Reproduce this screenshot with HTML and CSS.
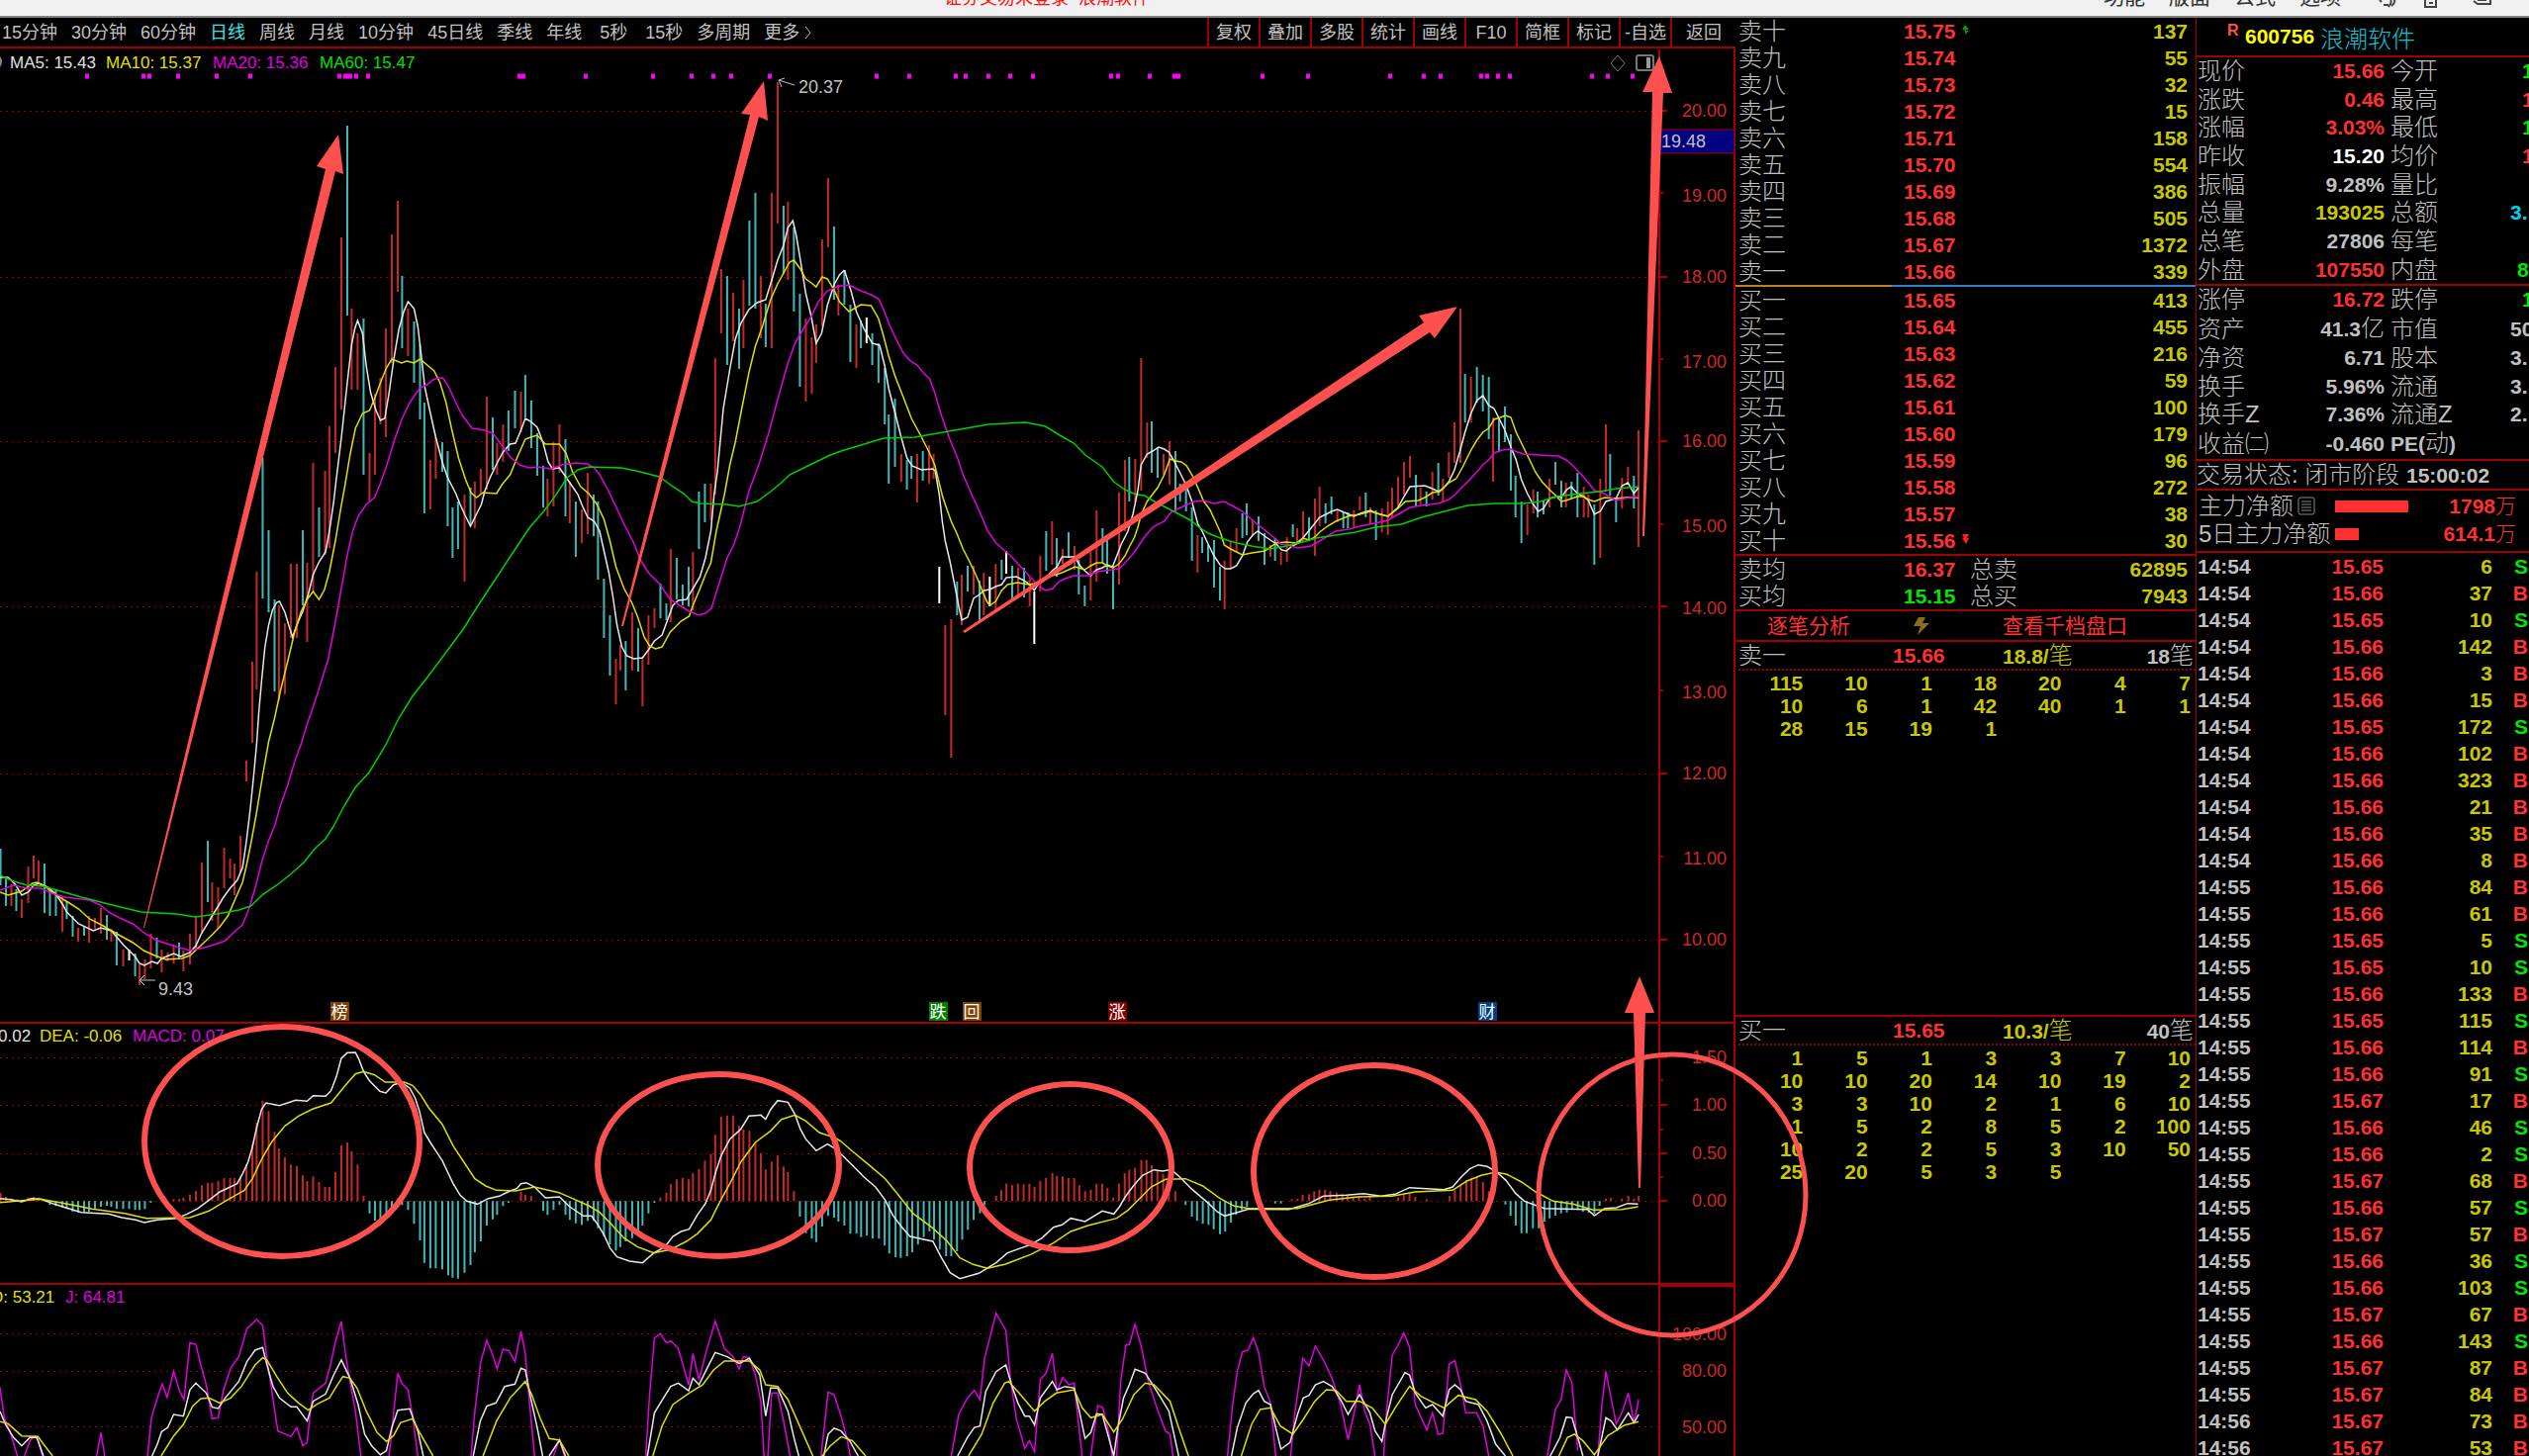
FILE: index.html
```html
<!DOCTYPE html>
<html lang="zh-CN">
<head>
<meta charset="utf-8">
<title>浪潮软件 600756</title>
<link rel="stylesheet" href="styles.css">
</head>
<body>
<header class="titlebar">
  <span class="app-title">证券交易未登录&nbsp; 浪潮软件</span>
  <nav class="menu">
    <a href="#">功能</a><a href="#">版面</a><a href="#">公式</a><a href="#">选项</a>
    <svg class="menu-icons" viewBox="0 0 130 17" width="130" height="17" fill="none" stroke="#444" stroke-width="2"><path d="M3 0l2 2M7 5h5M14 0q2 2-2 7M18 0q1 3-3 6"/><path d="M49 0v7h11V0M53 3h4"/><path d="M98 1l4 3h13V0M102 0h9"/></svg>
  </nav>
</header>
<main class="workspace">
<section class="chart">
  <nav class="toolbar">
    <div class="periods">
      <button>15分钟</button><button>30分钟</button><button>60分钟</button><button class="active">日线</button><button>周线</button><button>月线</button><button>10分钟</button><button>45日线</button><button>季线</button><button>年线</button><button class="sec">5秒</button><button class="sec">15秒</button><button>多周期</button><button>更多 <svg width="8" height="16" viewBox="0 0 8 16" fill="none" stroke="#c0c0c0"><path d="M1 2l5 6-5 6"/></svg></button>
    </div>
    <div class="tools">
      <button>复权</button><button>叠加</button><button>多股</button><button>统计</button><button>画线</button><button>F10</button><button>简框</button><button>标记</button><button>-自选</button><button class="back">返回</button>
    </div>
  </nav>
  <div class="plot">
  <svg class="plot-svg" viewBox="0 49 1754 1423">
    <g class="grid"><path d="M0 112H1677M0 280H1677M0 446H1677M0 613H1677M0 782H1677M0 950H1677M0 1069H1677M0 1117H1677M0 1166H1677M0 1214H1677M0 1348H1677M0 1386H1677M0 1442H1677"/></g>
    <g class="frame"><path d="M1677 50V1472M1753 50V1472M0 1034H1753M0 1298H1753M1678 1300H1753"/>
    <path d="M1677 112h8M1677 195h4M1677 280h8M1677 363h4M1677 446h8M1677 530h4M1677 613h8M1677 698h4M1677 782h8M1677 866h4M1677 950h8M1677 1069h8M1677 1092h4M1677 1117h8M1677 1142h4M1677 1166h8M1677 1190h4M1677 1214h8"/></g>
    <path class="signals" d="M86 77h4M143 77h4M149 77h4M178 77h4M217 77h4M251 77h4M341 77h4M347 77h9M358 77h4M370 77h4M523 77h8M590 77h4M658 77h4M697 77h4M719 77h4M737 77h4M776 77h4M884 77h4M917 77h4M964 77h4M974 77h4M997 77h4M1019 77h4M1042 77h4M1121 77h4M1128 77h4M1160 77h4M1185 77h8M1274 77h4M1320 77h4M1403 77h4M1437 77h4M1454 77h4M1495 77h4M1501 77h4M1512 77h4M1524 77h4M1607 77h4M1623 77h4M1648 77h4"/>

    <!-- daily bars -->
    <g class="bars" transform="scale(.54845 1)">
      <path class="dn" d="M1 858V895M11 887V916M30 899V921M82 873V923M92 899V926M103 899V926M123 911V929M134 926V947M155 936V946M197 925V950M215 942V976M249 964V987M289 948V969M330 953V969M383 850V912M484 463V605M495 536V619M506 606V699M558 536V612M588 513V563M640 127V319M670 322V480M741 279V352M763 325V387M774 348V424M782 407V519M815 447V477M825 456V532M834 513V564M844 507V555M867 493V530M908 422V475M937 415V456M949 395V433M968 379V422M979 405V453M990 438V481M1001 471V513M1042 444V522M1061 507V563M1094 500V542M1102 507V586M1113 585V645M1124 622V683M1153 648V698M1176 635V679M1217 590V625M1228 610V627M1247 564V606M1258 591V612M1269 573V613M1288 497V555M1299 489V528M1340 279V369M1362 312V373M1381 223V309M1392 195V312M1411 307V351M1444 208V277M1463 230V315M1474 297V391M1537 229V303M1556 273V308M1567 308V366"/>
      <path class="up" d="M21 894V916M40 909V928M52 876V913M62 865V888M71 870V894M115 907V942M144 938V952M164 926V953M175 928V939M186 918V944M205 939V952M227 960V977M257 975V996M267 970V990M278 944V979M298 960V983M309 963V972M320 955V974M338 961V982M350 944V975M361 927V960M372 872V944M391 892V931M402 897V939M413 857V898M424 868V888M432 873V905M443 845V882M454 769V790M465 669V751M473 578V697M514 612V708M525 630V702M536 570V645M547 570V645M566 569V649M577 468V598M599 476V561M607 431V554M618 371V458M629 240V414M648 312V394M659 337V394M681 458V507M691 398V480M701 382V429M711 332V442M722 237V367M733 203V295M752 312V360M793 465V515M803 442V484M856 500V588M875 487V534M886 474V500M897 401V495M916 448V480M927 429V467M960 396V437M1009 484V522M1020 447V512M1031 429V478M1050 487V529M1072 515V549M1083 478V540M1135 666V712M1143 652V678M1165 619V678M1184 664V714M1195 622V672M1206 615V635M1236 555V629M1277 558V617M1310 489V526M1318 362V500M1329 272V337M1351 296V345M1370 283V352M1402 279V342M1422 195V352M1433 83V226M1452 204V283M1485 322V406M1496 341V398M1504 328V367M1515 242V330M1526 180V250M1545 288V319"/>
      <path class="flat" d="M238 960V971"/>
    </g>
    <g class="bars" transform="translate(850 0) scale(.574 1)">
      <path class="dn" d="M35 324V352M55 337V369M66 347V387M77 372V429M84 419V489M95 403V472M116 465V495M124 461V484M144 456V486"/>
      <path class="up" d="M27 328V372M106 459V487M134 459V508M155 450V489M163 459V484"/>
      <path class="flat" d="M45 321V347"/>
    </g>
    <g class="bars" transform="translate(640 0) scale(.33333 1)">
      <path class="dn" d="M982 588V622M1014 572V598M1050 587V628M1117 566V586M1149 572V606M1185 574V604M1252 537V577M1284 544V583M1320 538V564M1351 566V601M1369 592V613M1423 534V569M1437 544V580M1455 572V616M1504 462V507"/>
      <path class="up" d="M946 632V723M964 626V766M996 581V632M1032 572V601M1063 579V622M1099 570V616M1167 574V602M1202 584V613M1234 562V598M1270 527V571M1302 555V570M1338 552V576M1387 558V607M1405 516V588M1473 498V591M1491 465V537M1522 464V508"/>
      <path class="flat" d="M928 573V610M1081 583V613M1131 557V580M1216 598V651"/>
    </g>
    <g class="bars" transform="translate(1150 0) scale(.33333 1)">
      <path class="dn" d="M42 426V478M60 452V483M114 456V517M128 489V507M146 487V517M164 513V567M195 543V559M213 551V568M231 546V594M249 573V607M317 519V544M330 509V541M366 522V547M384 539V571M416 544V567M470 530V543M519 523V545M569 509V529M587 502V520M623 518V534M637 518V534M691 498V523M722 516V546M843 480V512M875 497V512M911 468V501M992 378V427M1028 371V407M1046 379V416M1064 381V444M1095 423V457M1113 411V447M1131 439V496M1145 481V523M1163 507V549M1212 497V523M1230 506V520M1266 467V490M1284 486V513M1315 487V504M1333 478V523M1384 510V571M1432 459V501M1450 503V528M1504 481V514"/>
      <path class="up" d="M10 362V496M28 427V463M78 459V480M96 446V490M181 541V579M263 567V616M281 547V575M299 534V558M348 526V542M402 551V563M434 558V571M452 543V568M483 534V550M501 517V548M537 504V562M551 492V532M605 515V528M655 516V533M673 502V516M705 513V530M740 514V538M758 507V541M771 493V524M789 482V513M807 467V500M825 461V483M857 493V510M893 477V505M925 484V507M943 457V483M960 427V468M978 312V468M1010 381V427M1077 422V487M1181 510V541M1199 495V519M1248 484V513M1298 488V513M1352 492V523M1366 500V523M1402 484V564M1419 429V497M1468 483V514M1486 472V490M1518 435V553"/>
    </g>

    <!-- moving averages -->
    <g class="lines" transform="scale(.54845 1)">
      <polyline class="w" points="0,887 15,887 28,894 40,905 52,902 62,895 72,893 88,897 103,904 115,914 123,922 145,934 172,941 186,938 205,941 227,955 249,967 257,974 266,976 280,972 290,974 298,969 320,964 333,967 350,963 361,956 372,943 391,926 412,907 424,898 437,890 447,877 454,851 461,819 467,787 473,752 477,720 482,689 488,655 495,632 502,617 510,609 515,608 525,619 532,632 539,644 547,632 558,618 568,601 577,581 588,568 600,558 607,537 615,507 620,483 629,443 640,387 648,348 654,332 659,324 668,337 675,370 683,397 693,415 701,425 709,423 717,397 726,362 735,333 744,315 752,305 763,312 770,330 776,358 783,392 792,415 803,442 815,467 825,483 840,499 848,510 858,522 867,532 876,522 887,510 893,497 903,483 917,467 927,457 940,449 950,448 960,435 968,423 978,426 990,432 1001,448 1010,467 1018,474 1031,473 1040,480 1050,488 1065,500 1072,510 1083,523 1095,527 1105,537 1113,557 1122,579 1130,605 1137,632 1146,654 1155,663 1168,666 1184,665 1195,657 1206,648 1220,642 1230,627 1240,612 1250,607 1265,606 1277,595 1290,583 1300,564 1310,537 1316,500 1322,477 1333,413 1345,373 1355,343 1365,327 1380,313 1395,306 1411,303 1420,287 1433,263 1444,248 1452,230 1461,223 1467,237 1475,263 1485,297 1495,320 1504,347 1514,337 1525,308 1537,288 1547,278 1556,273"/>
      <polyline class="y" points="0,902 15,905 40,901 60,893 68,892 82,896 103,905 125,912 145,919 165,929 190,936 215,944 245,953 265,961 285,966 305,970 335,969 350,966 370,956 391,945 405,937 420,926 435,907 447,892 455,873 463,851 472,824 484,784 495,750 506,726 517,698 530,669 543,639 555,618 566,606 577,598 588,606 598,596 607,578 618,547 628,514 635,493 645,460 655,433 668,418 681,415 691,402 701,387 712,372 722,363 740,367 750,365 763,367 774,363 785,368 800,375 811,387 822,407 832,433 845,463 858,485 868,498 878,503 890,498 915,499 925,490 940,480 955,460 968,444 978,442 990,440 1005,449 1031,449 1043,458 1055,477 1070,492 1085,499 1100,510 1113,525 1124,547 1135,573 1150,595 1165,610 1176,625 1187,644 1197,653 1208,656 1220,654 1235,639 1255,628 1270,623 1277,612 1290,595 1300,581 1310,569 1320,537 1335,500 1345,470 1355,447 1367,413 1380,377 1392,350 1405,330 1420,303 1433,287 1445,275 1455,265 1463,263 1475,272 1485,282 1495,286 1504,290 1515,280 1525,282 1537,293 1547,305 1554,309"/>
      <polyline class="m" points="0,900 25,895 50,898 75,898 95,903 120,907 165,910 185,915 200,922 220,928 245,934 265,943 290,951 325,957 350,961 370,959 395,955 415,951 430,943 447,935 460,917 472,894 482,872 495,850 506,835 517,814 530,794 543,770 555,752 566,732 580,710 592,689 605,666 617,632 628,598 640,561 650,537 660,522 675,510 690,503 700,490 713,470 728,443 741,423 755,407 774,392 787,389 798,384 808,382 816,382 826,390 840,407 852,420 870,433 895,435 908,438 925,450 940,462 958,470 975,473 990,472 1015,474 1035,470 1060,468 1083,469 1095,473 1105,480 1120,495 1135,512 1150,530 1168,549 1180,566 1195,579 1215,590 1235,606 1255,613 1270,618 1288,622 1300,620 1311,615 1325,590 1340,564 1352,551 1362,535 1372,514 1380,497 1400,467 1417,437 1435,400 1452,367 1465,347 1480,333 1495,320 1508,305 1525,294 1547,289 1552,289"/>
      <polyline class="g" points="0,885 25,891 50,895 80,896 105,900 150,907 200,914 260,922 325,924 360,927 400,924 440,920 462,916 485,904 510,895 535,884 560,872 580,858 600,848 615,835 635,814 655,796 680,781 710,754 735,726 760,704 790,683 820,661 855,635 880,613 910,588 940,563 975,534 1005,515 1025,500 1045,483 1065,475 1085,472 1145,473 1180,477 1215,482 1240,492 1260,499 1275,507 1290,509 1340,510 1362,512 1395,507 1420,497 1440,488 1455,480 1500,468 1530,460 1550,456"/>
    </g>
    <g class="lines" transform="translate(850 0) scale(.574 1)">
      <polyline class="w" points="6,273 18,295 27,315 40,332 55,347 68,349 77,370 84,393 95,417 105,440 116,463 125,471 142,475 162,474 167,477"/>
      <polyline class="y" points="4,309 14,315 35,308 53,309 66,322 75,340 84,360 95,380 110,402 124,423 140,440 155,457 165,470 178,500"/>
      <polyline class="m" points="1,289 14,288 35,294 53,298 66,302 75,313 85,328 97,343 110,357 122,365 134,369 145,377 156,383 165,397 175,417 190,442 205,463 215,480 230,500"/>
      <polyline class="g" points="0,456 35,450 75,443 130,442 190,436 230,432 260,429 325,427 360,431 385,440 410,448 430,460 460,472 480,487 500,495 515,499 523,500"/>
    </g>
    <g class="lines" transform="translate(640 0) scale(.33333 1)">
      <polyline class="w" points="916,477 928,500 937,527 946,547 960,567 975,592 987,613 996,627 1014,624 1032,605 1050,601 1063,597 1081,596 1099,593 1117,591 1131,584 1162,583 1185,587 1202,591 1216,597 1230,589 1250,585 1270,577 1285,573 1300,563 1338,563 1355,572 1369,577 1387,582 1405,576 1423,574 1437,571 1453,573 1465,563 1480,550 1500,537 1515,520 1530,496"/>
      <polyline class="y" points="936,500 946,510 964,527 982,540 1000,555 1020,568 1040,582 1058,597 1072,608 1081,612 1099,608 1117,597 1135,591 1165,589 1200,591 1216,590 1250,584 1270,582 1300,579 1320,576 1340,573 1369,576 1387,572 1405,569 1423,569 1437,572 1455,574 1473,570 1491,562 1504,553 1520,543 1530,533"/>
      <polyline class="m" points="1026,500 1050,517 1075,537 1100,549 1131,558 1150,564 1175,573 1200,582 1220,589 1240,595 1252,597 1272,595 1290,588 1310,585 1335,582 1380,582 1405,578 1450,576 1473,575 1491,569 1515,560 1530,553"/>
    </g>
    <g class="lines" transform="translate(1150 0) scale(.33333 1)">
      <polyline class="w" points="0,496 10,470 28,459 45,456 63,452 80,454 94,457 108,465 128,478 146,490 164,507 182,530 195,537 213,550 231,562 249,571 265,575 281,575 299,572 317,562 332,548 348,541 364,537 384,542 402,546 420,550 436,556 450,557 468,552 488,549 505,542 525,534 551,523 570,520 587,517 605,515 625,518 655,522 675,519 705,516 725,519 758,522 789,513 807,502 825,492 870,491 893,494 911,497 925,494 943,487 960,475 975,458 992,437 1010,418 1028,405 1046,400 1064,410 1080,413 1095,423 1113,435 1131,452 1147,465 1163,485 1181,499 1199,510 1214,517 1230,514 1248,504 1270,502 1284,503 1300,495 1314,492 1333,499 1352,502 1366,506 1384,520 1402,517 1419,507 1450,504 1468,491 1486,488 1504,499 1518,493"/>
      <polyline class="y" points="0,533 10,520 28,507 60,493 80,480 97,464 114,466 132,467 148,471 164,480 182,493 200,507 218,515 235,527 250,538 262,551 281,555 317,561 345,559 385,557 420,549 450,548 480,549 500,544 520,546 537,543 551,538 575,532 600,527 637,522 673,520 705,517 735,520 758,522 789,514 811,507 850,506 870,503 893,498 915,497 943,488 965,484 985,472 1010,455 1028,445 1046,437 1064,433 1080,424 1100,422 1115,420 1131,422 1147,437 1163,448 1185,463 1205,477 1225,487 1248,495 1270,502 1284,507 1298,506 1333,502 1352,502 1366,505 1384,507 1415,503 1450,504 1480,503 1518,503"/>
      <polyline class="m" points="0,553 20,543 45,533 80,527 100,518 130,513 170,507 200,506 230,509 262,507 285,511 317,517 348,526 385,536 415,544 434,550 455,551 485,554 525,552 551,547 575,542 600,537 640,535 673,532 720,529 758,526 789,520 825,513 860,511 911,509 943,505 965,499 978,494 1000,487 1028,477 1046,470 1064,465 1080,458 1105,455 1131,454 1150,457 1170,459 1215,460 1275,461 1298,465 1320,471 1345,480 1366,488 1384,496 1402,497 1430,502 1450,506 1475,504 1518,502"/>
      <polyline class="g" points="0,500 20,501 50,507 85,513 120,519 160,526 182,532 213,539 250,544 300,549 345,552 400,555 450,552 500,548 540,544 600,541 660,538 720,533 800,530 860,523 930,517 1000,511 1080,509 1170,509 1220,507 1270,502 1340,499 1400,497 1450,494 1518,492"/>
    </g>

    <!-- MACD and KDJ -->
    <g transform="translate(0 1020) scale(.54845 .33333)">
      <g class="bars">
      <path class="up" d="M1 583V558M11 583V570M21 583V575M32 583V577M52 583V572M62 583V570M71 583V572M320 583V577M330 583V577M338 583V573M350 583V563M361 583V553M372 583V535M383 583V527M391 583V527M402 583V522M413 583V513M424 583V513M432 583V513M443 583V510M454 583V472M465 583V410M473 583V345M484 583V278M495 583V310M506 583V373M514 583V423M525 583V450M536 583V472M547 583V477M558 583V505M566 583V522M577 583V508M588 583V525M599 583V540M607 583V540M618 583V495M629 583V413M640 583V405M648 583V432M659 583V472M670 583V567M960 583V555M968 583V563M979 583V568M1217 583V572M1228 583V558M1236 583V530M1247 583V517M1258 583V513M1269 583V517M1277 583V498M1288 583V485M1299 583V460M1310 583V440M1318 583V382M1329 583V327M1340 583V323M1351 583V323M1362 583V355M1370 583V365M1381 583V370M1392 583V405M1402 583V437M1411 583V487M1422 583V463M1433 583V445M1444 583V478M1452 583V495M1463 583V553"/>
      <path class="dn" d="M92 583V595M103 583V598M115 583V602M123 583V607M134 583V615M144 583V617M155 583V617M164 583V615M175 583V607M186 583V600M197 583V597M205 583V600M215 583V607M227 583V607M238 583V607M249 583V610M257 583V610M267 583V607M278 583V588M681 583V620M691 583V642M701 583V637M712 583V627M722 583V607M733 583V590M741 583V595M752 583V610M763 583V652M774 583V702M782 583V770M793 583V787M803 583V787M815 583V790M826 583V808M834 583V815M844 583V818M856 583V800M867 583V777M875 583V738M886 583V705M897 583V657M908 583V638M916 583V625M927 583V598M937 583V588M1001 583V613M1009 583V625M1020 583V610M1031 583V595M1042 583V625M1050 583V640M1061 583V650M1072 583V655M1083 583V643M1094 583V643M1102 583V665M1113 583V690M1124 583V715M1135 583V733M1143 583V722M1153 583V705M1165 583V695M1176 583V680M1184 583V657M1195 583V620M1206 583V588M1474 583V630M1485 583V680M1496 583V697M1504 583V707M1515 583V660M1526 583V628M1537 583V633M1545 583V645M1556 583V657M1567 583V682"/>
      </g>
      <g class="lines">
      <polyline class="w" points="0,575 20,578 40,585 58,575 75,577 100,592 120,602 150,617 200,622 225,633 250,640 266,648 290,640 325,635 345,622 365,605 385,580 405,555 437,530 447,500 457,465 465,420 473,360 482,305 490,285 515,293 545,277 566,280 577,263 600,265 610,248 620,205 629,150 640,133 655,132 662,155 670,190 681,218 700,250 711,255 725,230 740,223 755,240 765,270 773,310 782,375 793,405 803,430 815,460 825,495 835,530 848,565 860,583 880,592 900,575 920,568 940,552 952,545 960,530 970,527 985,540 1005,573 1031,570 1050,600 1075,628 1090,628 1102,655 1113,685 1124,725 1137,752 1160,765 1184,770 1205,740 1225,722 1240,690 1255,675 1270,668 1285,625 1300,590 1310,550 1318,500 1329,445 1345,395 1365,365 1380,325 1402,322 1411,335 1420,305 1433,278 1452,283 1465,320 1475,365 1485,395 1504,430 1525,410 1540,425 1550,440"/>
      <polyline class="y" points="0,587 30,583 75,577 120,590 170,607 230,620 270,635 350,633 385,613 415,583 450,550 465,515 484,450 500,405 525,355 550,325 577,303 610,285 625,255 640,225 655,197 670,190 690,200 710,222 745,222 760,232 775,260 790,300 815,350 835,415 855,465 875,515 895,537 915,550 950,552 985,540 1030,557 1055,575 1085,597 1105,617 1125,650 1150,695 1175,722 1205,740 1235,730 1265,705 1285,682 1310,640 1325,590 1345,530 1365,465 1392,405 1420,370 1440,335 1465,322 1485,340 1510,375 1540,392 1550,402"/>
      <path class="m" d="M0 1148L8 1240 20 1290 32 1356M45 1356L55 1310 64 1295 70 1310 78 1356M178 1356L186 1285 193 1356M272 1356L279 1240 290 1180 299 1138 308 1178 320 1100 330 1155 339 1185 345 1090 350 1012 361 1018 370 1080 380 1140 391 1243 402 1240 412 1155 425 1090 440 1055 455 970 473 942 484 960 492 1060 500 1150 512 1280 536 1297 547 1270 558 1325 566 1315 572 1220 577 1165 600 1135 609 1080 618 1010 629 948 637 1050 645 1130 655 1220 665 1356M717 1356L725 1230 733 1105 741 1137 752 1155 760 1230 770 1356M868 1356L875 1220 886 1070 897 1005 907 1045 916 1092 927 1032 938 1037 949 1070 960 978 968 1045 975 1180 985 1356M1020 1356L1031 1305 1040 1356M1190 1356L1197 1170 1206 998 1217 985 1228 1013 1236 1007 1250 1030 1269 1140 1277 1045 1288 1125 1303 1030 1318 947 1335 1030 1351 1055 1362 1092 1370 1055 1381 1058 1392 1110 1402 1190 1408 1356M1415 1356L1422 1165 1433 1165 1444 1250 1456 1356M1513 1356L1526 1162 1537 1170 1550 1235"/>
      <path class="w" d="M0 1220L10 1260 25 1300 40 1325 55 1300 68 1300 80 1356M280 1356L290 1320 298 1282 309 1270 320 1230 338 1235 350 1155 361 1135 380 1165 391 1208 402 1212 415 1180 440 1130 455 1070 470 1035 484 1027 492 1080 503 1145 515 1180 536 1207 547 1207 566 1250 577 1190 600 1168 615 1110 629 1065 645 1120 660 1200 672 1290 685 1325 701 1352 712 1340 722 1270 733 1217 755 1213 770 1280 780 1356M872 1356L885 1250 897 1205 914 1195 930 1145 949 1138 960 1090 968 1095 978 1180 990 1270 1000 1356M1012 1356L1031 1308 1042 1356M1193 1356L1206 1225 1217 1195 1236 1145 1250 1135 1269 1158 1277 1120 1288 1140 1303 1090 1318 1042 1340 1055 1362 1075 1381 1060 1400 1110 1411 1235 1420 1150 1433 1150 1452 1220 1463 1300 1472 1356M1518 1356L1526 1290 1537 1272 1550 1280"/>
      <path class="y" d="M0 1252L15 1258 40 1295 70 1297 80 1320 97 1356M297 1356L320 1295 338 1260 355 1205 370 1182 385 1180 405 1195 425 1180 445 1145 470 1080 484 1058 492 1065 510 1115 530 1165 550 1195 568 1217 585 1198 607 1180 620 1145 632 1115 645 1120 658 1150 675 1220 695 1285 712 1312 725 1295 738 1255 760 1243 775 1290 798 1356M890 1356L915 1250 940 1180 968 1130 980 1170 995 1240 1012 1303 1031 1308 1048 1356M1203 1356L1220 1265 1240 1200 1270 1165 1295 1140 1315 1095 1335 1068 1381 1068 1400 1095 1411 1140 1433 1145 1452 1185 1475 1270 1498 1356M1515 1356L1530 1325 1550 1298"/>
      </g>
    </g>
    <g transform="translate(850 1020) scale(.58036 .33333)">
      <g class="bars">
      <path class="dn" d="M27 583V682M35 583V692M45 583V688M55 583V697M66 583V697M76 583V718M84 583V742M95 583V753M104 583V755M115 583V750M124 583V738M134 583V715M144 583V692M154 583V675M162 583V700M172 583V730M183 583V750M192 583V750M202 583V735M211 583V700M221 583V670M231 583V640M242 583V620M250 583V595M600 583V595M611 583V630M620 583V643M630 583V652M640 583V655M649 583V668M660 583V683M669 583V675M679 583V648M688 583V625M698 583V610M707 583V600M756 583V590M766 583V590M1157 583V593M1166 583V627M1175 583V657M1185 583V680M1194 583V680M1205 583V665M1215 583V665M1225 583V645M1234 583V635M1244 583V627M1254 583V620M1264 583V617M1273 583V610M1283 583V610M1292 583V615M1302 583V618M1312 583V622M1321 583V597"/>
      <path class="up" d="M270 583V567M279 583V550M288 583V530M298 583V535M308 583V530M318 583V532M328 583V530M337 583V540M347 583V522M357 583V513M368 583V498M376 583V507M386 583V508M396 583V513M406 583V513M415 583V535M425 583V553M435 583V548M445 583V530M455 583V530M464 583V543M474 583V573M484 583V530M494 583V498M502 583V488M512 583V482M523 583V458M532 583V458M541 583V475M551 583V492M561 583V500M571 583V525M582 583V553M785 583V577M795 583V575M804 583V563M815 583V562M824 583V553M833 583V548M843 583V548M852 583V553M863 583V557M873 583V562M882 583V567M892 583V570M902 583V567M912 583V575M921 583V570M970 583V572M980 583V560M990 583V560M1000 583V570M1020 583V577M1060 583V567M1069 583V550M1079 583V535M1089 583V520M1098 583V512M1107 583V510M1118 583V525M1128 583V553M1332 583V575M1341 583V573M1360 583V575M1371 583V567M1381 583V575M1389 583V567"/>
      </g>
      <g class="lines">
      <polyline class="w" points="0,440 20,475 40,510 60,540 77,580 90,625 105,660 120,690 160,705 175,755 190,800 207,818 240,802 270,770 290,740 330,715 350,695 370,662 385,655 400,635 425,645 455,613 475,622 485,600 495,570 510,535 525,505 545,488 560,492 575,487 590,510 610,545 640,590 655,615 668,628 690,617 710,607 780,608 815,590 840,568 880,565 910,560 940,568 965,562 990,542 1050,548 1065,540 1080,510 1095,485 1110,473 1125,478 1140,492 1158,520 1175,560 1190,583 1225,605 1300,608 1312,627 1330,605 1350,603 1370,590 1388,592"/>
      <polyline class="y" points="0,402 20,432 50,475 77,515 100,565 125,620 160,665 185,705 207,755 230,775 255,787 285,775 330,745 370,710 400,675 430,657 480,635 500,610 520,575 540,540 565,517 600,515 630,537 660,575 685,598 710,605 795,605 850,580 900,570 960,568 1000,555 1065,550 1090,522 1115,505 1140,495 1160,502 1185,525 1210,555 1240,583 1275,592 1310,610 1360,608 1388,600"/>
      <path class="m" d="M0 1235L10 1300 16 1356M192 1356L205 1230 220 1180 232 1157 242 1185 250 1060 270 923 287 975 295 1120 305 1240 320 1333 328 1310 337 1343 347 1125 357 1105 368 1045 376 1160 386 1118 397 1140 406 1135 415 1280 420 1356M435 1356L447 1203 456 1210 467 1290 472 1356M480 1356L487 1130 496 1020 502 1018 512 957 523 1025 535 1130 550 1210 565 1280 573 1290 578 1356M673 1356L682 1200 690 1100 699 1040 709 1035 718 997 727 1040 737 1145 748 1195 757 1356M783 1356L790 1230 804 1060 815 1083 826 1023 840 1065 855 1120 870 1200 883 1307 893 1230 903 1140 912 1220 921 1260 930 1356M945 1356L950 1220 960 1050 970 1020 980 983 990 1025 1000 1200 1020 1277 1030 1225 1040 1290 1048 1287 1059 1077 1069 1067 1079 1140 1088 1225 1107 1225 1118 1265 1128 1356M1230 1356L1244 1215 1254 1185 1263 1095 1273 1135 1283 1340M1318 1356L1325 1200 1332 1100 1341 1180 1350 1258 1360 1225 1371 1165 1381 1255 1389 1185"/>
      <path class="w" d="M0 1280L15 1310 30 1356M203 1356L220 1300 232 1270 242 1265 252 1160 270 1100 287 1080 297 1140 308 1195 320 1235 328 1235 337 1262 347 1180 368 1130 376 1155 390 1145 406 1150 415 1220 425 1303 435 1285 445 1228 455 1230 475 1356 482 1270 492 1180 502 1140 512 1093 530 1105 550 1160 571 1220 588 1356M680 1356L690 1270 705 1195 718 1167 727 1157 737 1190 748 1200 757 1270 766 1335 782 1315 795 1230 805 1180 815 1172 826 1140 840 1130 855 1145 870 1185 883 1230 903 1170 921 1225 930 1280 942 1312 950 1240 960 1170 982 1103 990 1110 1000 1165 1018 1210 1030 1200 1048 1235 1059 1155 1069 1140 1079 1155 1088 1190 1110 1200 1125 1250 1140 1320 1157 1356M1235 1356L1252 1300 1263 1238 1273 1240 1283 1300 1292 1356M1318 1356L1332 1240 1341 1250 1352 1277 1371 1225 1381 1255 1389 1230"/>
      <path class="y" d="M0 1297L20 1310 43 1356M222 1356L245 1290 265 1195 285 1135 292 1130 310 1165 337 1220 355 1190 375 1165 406 1155 420 1210 435 1240 455 1230 475 1283 490 1245 510 1170 530 1135 545 1140 573 1190 588 1270 605 1356M697 1356L715 1260 730 1215 748 1210 765 1265 787 1290 805 1245 825 1190 845 1155 862 1157 880 1190 903 1190 925 1210 948 1260 965 1210 990 1145 1010 1175 1050 1210 1075 1172 1105 1185 1125 1220 1150 1290 1170 1356M1250 1356L1265 1300 1277 1290 1292 1310 1312 1352 1335 1295 1365 1262 1389 1252"/>
      </g>
    </g>

    <g class="axis">
      <text x="1745" y="118">20.00</text><text x="1745" y="204">19.00</text><text x="1745" y="286">18.00</text><text x="1745" y="372">17.00</text><text x="1745" y="452">16.00</text><text x="1745" y="538">15.00</text><text x="1745" y="621">14.00</text><text x="1745" y="706">13.00</text><text x="1745" y="788">12.00</text><text x="1745" y="874">11.00</text><text x="1745" y="956">10.00</text>
      <text x="1745" y="1075">1.50</text><text x="1745" y="1123">1.00</text><text x="1745" y="1172">0.50</text><text x="1745" y="1220">0.00</text>
      <text x="1745" y="1355">100.00</text><text x="1745" y="1392">80.00</text><text x="1745" y="1449">50.00</text>
    </g>
    <rect x="1677" y="131" width="76" height="24" fill="#000080" stroke="#b00000"/>
    <text class="note" x="1679" y="149">19.48</text>
    <g class="legend">
      <path d="M0 57q4 5 0 11" fill="#888"/>
      <text class="tw" x="10" y="69">MA5: 15.43</text><text class="ty" x="107" y="69">MA10: 15.37</text><text class="tm" x="215" y="69">MA20: 15.36</text><text class="tg" x="323" y="69">MA60: 15.47</text>
      <text class="tw" x="-2" y="1053">0.02</text><text class="ty" x="40" y="1053">DEA: -0.06</text><text class="tm" x="134" y="1053">MACD: 0.07</text>
      <text class="ty" x="-9" y="1317">D: 53.21</text><text class="tm" x="66" y="1317">J: 64.81</text>
    </g>
    <g fill="none" stroke="#c0c0c0"><path d="M803 86l-16-5M793 79l-6 2 3 7M157 991h-16M146 986l-5 5 5 5"/><path d="M1635 56l7 8-7 8-7-8z" stroke="#777"/><rect x="1654" y="56" width="17" height="15" rx="2" stroke="#777" stroke-width="2"/><path d="M1666 58v11" stroke="#999" stroke-width="4"/></g>
    <text class="note" x="807" y="94">20.37</text><text class="note" x="160" y="1006">9.43</text>
    <g class="badge">
      <rect x="334" y="1013" width="19" height="19" fill="#804000"/><text x="343" y="1029">榜</text>
      <rect x="939" y="1013" width="19" height="19" fill="#008000"/><text x="948" y="1029">跌</text>
      <rect x="973" y="1013" width="19" height="19" fill="#804000"/><text x="982" y="1029">回</text>
      <rect x="1120" y="1013" width="19" height="19" fill="#800000"/><text x="1129" y="1029">涨</text>
      <rect x="1494" y="1013" width="19" height="19" fill="#004080"/><text x="1503" y="1029">财</text>
    </g>
  </svg>
  <!-- hand-drawn marks over the charts -->
  <svg class="marks" viewBox="0 49 1754 1423">
    <g fill="#ff5050">
      <path d="M145 938L329 171 320 168 342 136 347 176 339 173 146 938z"/>
      <path d="M628 633L758 116 749 115 772 82 776 122 767 118 630 633z"/>
      <path d="M973 638L1439 326 1434 319 1473 310 1450 342 1445 336 975 640z"/>
      <path d="M1660 542L1670 93H1660L1677 57 1690 94H1681L1662 542z"/>
      <path d="M1656 1201L1651 1024H1642L1657 987 1672 1024H1663L1658 1201z"/>
    </g>
    <g class="rings">
      <ellipse cx="285" cy="1154" rx="139" ry="116"/><ellipse cx="726" cy="1178" rx="122" ry="92"/><ellipse cx="1082" cy="1180" rx="102" ry="84"/><ellipse cx="1389" cy="1184" rx="122" ry="107"/><ellipse class="thin" cx="1690" cy="1208" rx="135" ry="142"/>
    </g>
  </svg>
  </div>
</section>

<section class="book">
  <table class="levels">
    <tr><th>卖十</th><td class="r">15.75<svg class="tick" viewBox="0 0 7 10"><path d="M3 0l4 5H4v1h3L3 10V5H0z" fill="#00a000"/></svg></td><td class="v">137</td></tr>
    <tr><th>卖九</th><td class="r">15.74</td><td class="v">55</td></tr>
    <tr><th>卖八</th><td class="r">15.73</td><td class="v">32</td></tr>
    <tr><th>卖七</th><td class="r">15.72</td><td class="v">15</td></tr>
    <tr><th>卖六</th><td class="r">15.71</td><td class="v">158</td></tr>
    <tr><th>卖五</th><td class="r">15.70</td><td class="v">554</td></tr>
    <tr><th>卖四</th><td class="r">15.69</td><td class="v">386</td></tr>
    <tr><th>卖三</th><td class="r">15.68</td><td class="v">505</td></tr>
    <tr><th>卖二</th><td class="r">15.67</td><td class="v">1372</td></tr>
    <tr><th>卖一</th><td class="r">15.66</td><td class="v">339</td></tr>
  </table>
  <div class="ratio"></div>
  <table class="levels">
    <tr><th>买一</th><td class="r">15.65</td><td class="v">413</td></tr>
    <tr><th>买二</th><td class="r">15.64</td><td class="v">455</td></tr>
    <tr><th>买三</th><td class="r">15.63</td><td class="v">216</td></tr>
    <tr><th>买四</th><td class="r">15.62</td><td class="v">59</td></tr>
    <tr><th>买五</th><td class="r">15.61</td><td class="v">100</td></tr>
    <tr><th>买六</th><td class="r">15.60</td><td class="v">179</td></tr>
    <tr><th>买七</th><td class="r">15.59</td><td class="v">96</td></tr>
    <tr><th>买八</th><td class="r">15.58</td><td class="v">272</td></tr>
    <tr><th>买九</th><td class="r">15.57</td><td class="v">38</td></tr>
    <tr><th>买十</th><td class="r">15.56<svg class="tick" viewBox="0 0 7 10"><path d="M0 0h7L5 4h2l-3 6-4-6h2z" fill="#ff2020"/></svg></td><td class="v">30</td></tr>
  </table>
  <table class="levels totals">
    <tr><th>卖均</th><td class="r">16.37</td><th class="sum">总卖</th><td class="v">62895</td></tr>
    <tr><th>买均</th><td class="gr">15.15</td><th class="sum">总买</th><td class="v">7943</td></tr>
  </table>
  <div class="links"><a href="#">逐笔分析</a><svg width="18" height="18" viewBox="0 0 18 18"><path d="M6 0h7l-3 6h7L5 18l3-9H1z" fill="#8a6d1c"/></svg><a href="#">查看千档盘口</a></div>
  <div class="queue sell">
    <div class="qhead"><span class="cn">卖一</span><b class="r">15.66</b><b class="v">18.8/<span>笔</span></b><b class="cnt">18<span>笔</span></b></div>
    <div class="orders"><span>115</span><span>10</span><span>1</span><span>18</span><span>20</span><span>4</span><span>7</span><span>10</span><span>6</span><span>1</span><span>42</span><span>40</span><span>1</span><span>1</span><span>28</span><span>15</span><span>19</span><span>1</span></div>
  </div>
  <div class="queue buy">
    <div class="qhead"><span class="cn">买一</span><b class="r">15.65</b><b class="v">10.3/<span>笔</span></b><b class="cnt">40<span>笔</span></b></div>
    <div class="orders"><span>1</span><span>5</span><span>1</span><span>3</span><span>3</span><span>7</span><span>10</span><span>10</span><span>10</span><span>20</span><span>14</span><span>10</span><span>19</span><span>2</span><span>3</span><span>3</span><span>10</span><span>2</span><span>1</span><span>6</span><span>10</span><span>1</span><span>5</span><span>2</span><span>8</span><span>5</span><span>2</span><span>100</span><span>10</span><span>2</span><span>2</span><span>5</span><span>3</span><span>10</span><span>50</span><span>25</span><span>20</span><span>5</span><span>3</span><span>5</span></div>
  </div>
</section>

<section class="quote">
  <h1><sup>R</sup><b>600756</b><span>浪潮软件</span></h1>
  <table class="facts main">
    <tr><th>现价</th><td class="r">15.66</td><th>今开</th><td class="gr in2">1</td></tr>
    <tr><th>涨跌</th><td class="r">0.46</td><th>最高</th><td class="r in2">1</td></tr>
    <tr><th>涨幅</th><td class="r">3.03%</td><th>最低</th><td class="gr in2">1</td></tr>
    <tr><th>昨收</th><td class="wh">15.20</td><th>均价</th><td class="r in2">1</td></tr>
    <tr><th>振幅</th><td>9.28%</td><th>量比</th><td></td></tr>
    <tr><th>总量</th><td class="v">193025</td><th>总额</th><td class="cy">3.</td></tr>
    <tr><th>总笔</th><td>27806</td><th>每笔</th><td></td></tr>
    <tr><th>外盘</th><td class="r">107550</td><th>内盘</th><td class="gr in1">8</td></tr>
  </table>
  <table class="facts more">
    <tr><th>涨停</th><td class="r">16.72</td><th>跌停</th><td class="gr in2">1</td></tr>
    <tr><th>资产</th><td>41.3<span>亿</span></td><th>市值</th><td>50</td></tr>
    <tr><th>净资</th><td>6.71</td><th>股本</th><td>3.</td></tr>
    <tr><th>换手</th><td>5.96%</td><th>流通</th><td>3.</td></tr>
    <tr><th>换手Z</th><td>7.36%</td><th>流通Z</th><td>2.</td></tr>
    <tr><th>收益㈡</th><td>-0.460</td><th><b>PE(</b>动<b>)</b></th><td></td></tr>
  </table>
  <p class="status">交易状态: 闭市阶段 <b>15:00:02</b></p>
  <div class="flows">
    <div class="flow"><span>主力净额</span><svg width="18" height="20" viewBox="0 0 18 20" fill="none" stroke="#888"><rect x="1" y="1" width="16" height="17" rx="2"/><path d="M4 5h10M4 8h10M4 11h10M4 14h10"/></svg><i style="width:74px"></i><b>1798<span>万</span></b></div>
    <div class="flow"><span>5日主力净额</span><i style="width:24px"></i><b>614.1<span>万</span></b></div>
  </div>
  <table class="trades">
    <tr><td>14:54</td><td>15.65</td><td>6</td><td class="s">S</td></tr>
    <tr><td>14:54</td><td>15.66</td><td>37</td><td>B</td></tr>
    <tr><td>14:54</td><td>15.65</td><td>10</td><td class="s">S</td></tr>
    <tr><td>14:54</td><td>15.66</td><td>142</td><td>B</td></tr>
    <tr><td>14:54</td><td>15.66</td><td>3</td><td>B</td></tr>
    <tr><td>14:54</td><td>15.66</td><td>15</td><td>B</td></tr>
    <tr><td>14:54</td><td>15.65</td><td>172</td><td class="s">S</td></tr>
    <tr><td>14:54</td><td>15.66</td><td>102</td><td>B</td></tr>
    <tr><td>14:54</td><td>15.66</td><td>323</td><td>B</td></tr>
    <tr><td>14:54</td><td>15.66</td><td>21</td><td>B</td></tr>
    <tr><td>14:54</td><td>15.66</td><td>35</td><td>B</td></tr>
    <tr><td>14:54</td><td>15.66</td><td>8</td><td>B</td></tr>
    <tr><td>14:55</td><td>15.66</td><td>84</td><td>B</td></tr>
    <tr><td>14:55</td><td>15.66</td><td>61</td><td>B</td></tr>
    <tr><td>14:55</td><td>15.65</td><td>5</td><td class="s">S</td></tr>
    <tr><td>14:55</td><td>15.65</td><td>10</td><td class="s">S</td></tr>
    <tr><td>14:55</td><td>15.66</td><td>133</td><td>B</td></tr>
    <tr><td>14:55</td><td>15.65</td><td>115</td><td class="s">S</td></tr>
    <tr><td>14:55</td><td>15.66</td><td>114</td><td>B</td></tr>
    <tr><td>14:55</td><td>15.66</td><td>91</td><td class="s">S</td></tr>
    <tr><td>14:55</td><td>15.67</td><td>17</td><td>B</td></tr>
    <tr><td>14:55</td><td>15.66</td><td>46</td><td class="s">S</td></tr>
    <tr><td>14:55</td><td>15.66</td><td>2</td><td class="s">S</td></tr>
    <tr><td>14:55</td><td>15.67</td><td>68</td><td>B</td></tr>
    <tr><td>14:55</td><td>15.66</td><td>57</td><td class="s">S</td></tr>
    <tr><td>14:55</td><td>15.67</td><td>57</td><td>B</td></tr>
    <tr><td>14:55</td><td>15.66</td><td>36</td><td class="s">S</td></tr>
    <tr><td>14:55</td><td>15.66</td><td>103</td><td class="s">S</td></tr>
    <tr><td>14:55</td><td>15.67</td><td>67</td><td>B</td></tr>
    <tr><td>14:55</td><td>15.66</td><td>143</td><td class="s">S</td></tr>
    <tr><td>14:55</td><td>15.67</td><td>87</td><td>B</td></tr>
    <tr><td>14:55</td><td>15.67</td><td>84</td><td>B</td></tr>
    <tr><td>14:56</td><td>15.67</td><td>73</td><td>B</td></tr>
    <tr><td>14:56</td><td>15.67</td><td>53</td><td>B</td></tr>
  </table>
</section>
</main>
</body>
</html>
```
FILE: styles.css
```css
* { box-sizing: border-box; }
body {
  margin: 0;
  height: 100vh;
  overflow: hidden;
  background: #000;
  color: #c0c0c0;
  font-family: "Liberation Sans", "Noto Sans CJK SC", sans-serif;
  font-size: 18px;
}
button { background: none; border: 0; padding: 0; color: inherit; font: inherit; white-space: nowrap; }
a { color: inherit; text-decoration: none; }
table { width: 100%; border-collapse: collapse; table-layout: fixed; }
th, td { padding: 0; white-space: nowrap; }
th { text-align: left; font-weight: 300; font-size: 24px; }
td, b { font-weight: 700; font-size: 21px; }

.titlebar {
  position: relative;
  display: flex;
  justify-content: space-between;
  height: 18px;
  overflow: hidden;
  background: #f0f0f0;
  border-bottom: 2px solid #808080;
}
.app-title { margin: -14px 0 0 954px; line-height: 24px; color: #ff1010; }
.menu { display: flex; gap: 24px; color: #333; font-size: 21px; line-height: 24px; }
.menu a { margin-top: -15px; }
.menu-icons { margin: 0 24px 0 12px; }

.workspace { display: grid; grid-template-columns: 1754fr 465fr 337fr; height: calc(100vh - 18px); }

.toolbar { display: flex; justify-content: space-between; height: 31px; border-bottom: 2px solid #a00000; }
.periods { display: flex; gap: 14px; padding-left: 2px; line-height: 30px; }
.periods .active { color: #40e0e0; }
.periods .sec { padding: 0 0 0 4px; }
.periods svg { vertical-align: -2px; }
.tools { display: flex; line-height: 30px; }
.tools button { width: 52px; border-left: 2px solid #a00000; }
.tools .back { width: 66px; }

.plot { position: relative; }
.plot-svg { display: block; width: 100%; }
.marks { position: absolute; inset: 0; width: 100%; overflow: visible; z-index: 2; pointer-events: none; }
.grid path { stroke: #900000; stroke-width: 1; stroke-dasharray: 2 4; fill: none; shape-rendering: crispEdges; }
.frame path { stroke: #a80000; stroke-width: 2; fill: none; shape-rendering: crispEdges; }
.signals { stroke: #ff00ff; stroke-width: 5; }
.bars path { fill: none; stroke-width: 2; vector-effect: non-scaling-stroke; }
.up { stroke: #c42828; }
.dn { stroke: #40b8b8; }
.flat { stroke: #ffffff; }
.lines path, .lines polyline { fill: none; stroke-width: 1.5; vector-effect: non-scaling-stroke; }
.w { stroke: #e8e8e8; }
.y { stroke: #e0e000; }
.m { stroke: #e000e0; }
.g { stroke: #00d000; }
.axis text { fill: #d02828; font-size: 18px; text-anchor: end; }
.note { fill: #c0c0c0; font-size: 18px; }
.legend text { font-size: 17px; }
.tw { fill: #e0e0e0; }
.ty { fill: #e0e000; }
.tm { fill: #e000e0; }
.tg { fill: #00e000; }
.badge text { fill: #fff; font-size: 17px; text-anchor: middle; }
.rings ellipse { fill: none; stroke: #ff5050; stroke-width: 6; }
.rings .thin { stroke-width: 5; }

.r { color: #ff3030; }
.gr { color: #00e600; }
.v { color: #c8c800; }
.cy { color: #00d0e0; }
.wh { color: #fff; }

.book { display: flex; flex-direction: column; min-width: 0; }
.levels tr { height: 27px; line-height: 27px; }
.levels th { width: 170px; padding-left: 3px; }
.levels .v { text-align: right; padding-right: 8px; }
.levels .r { width: 66px; }
.tick { width: 7px; height: 10px; margin-left: 6px; vertical-align: 4px; }
.ratio { height: 2px; background: linear-gradient(90deg, #c08020 34%, #3080d0 34%); }
.totals { border-top: 2px solid #a00000; border-bottom: 2px solid #a00000; }
.totals .sum { width: 80px; padding-left: 1px; }
.links {
  display: flex;
  align-items: center;
  height: 31px;
  flex: none;
  padding-left: 32px;
  gap: 63px;
  border-bottom: 2px solid #a00000;
  color: #ff3030;
  font-size: 21px;
  line-height: 28px;
}
.links a:last-child { margin-left: 10px; }
.queue { min-height: 0; padding-left: 3px; }
.sell { flex: 378 1 0; border-bottom: 2px solid #a00000; }
.buy { flex: 446 1 0; }
.qhead {
  display: grid;
  grid-template-columns: 156px 111px 1fr auto;
  height: 29px;
  line-height: 27px;
  padding-right: 2px;
  border-bottom: 2px dotted #900000;
}
.qhead .cn, .qhead b span { font-size: 24px; font-weight: 300; }
.orders {
  display: grid;
  grid-template-columns: repeat(7, 1fr);
  padding: 1px 5px 0 0;
  font-size: 21px;
  font-weight: 700;
  line-height: 23px;
  text-align: right;
  color: #c8c800;
}

.quote { min-width: 0; overflow: hidden; border-left: 1px solid #a00000; }
h1 { display: flex; align-items: center; height: 40px; margin: 0; padding-left: 31px; font-weight: 400; border-bottom: 2px solid #a00000; }
h1 sup { width: 18px; font-size: 16px; font-weight: 700; color: #ff5050; line-height: 16px; padding-bottom: 12px; }
h1 b { color: #ffff00; }
h1 span { margin-left: 6px; font-size: 24px; font-weight: 300; color: #00c8d8; }
.facts { border-bottom: 2px solid #a00000; line-height: 24px; }
.main { height: 231px; }
.more { height: 177px; }
.facts th:first-child { width: 80px; }
.facts th { width: 127px; padding-left: 1px; }
.facts td:nth-child(2) { width: 110px; text-align: right; }
.facts th:nth-child(3) { padding-left: 6px; }
.facts td span { font-size: 24px; font-weight: 300; }
.facts .in1 { padding-left: 7px; }
.facts .in2 { padding-left: 12px; }
.status { margin: 0; height: 30px; line-height: 28px; font-size: 24px; font-weight: 300; white-space: nowrap; border-bottom: 2px solid #a00000; }
.flows { padding: 2px 13px 3px 2px; border-bottom: 2px solid #a00000; }
.flow { display: grid; grid-template-columns: auto 1fr auto; align-items: center; height: 28px; line-height: 28px; font-size: 24px; font-weight: 300; position: relative; }
.flow > svg { margin-left: 4px; }
.flow i { position: absolute; left: 138px; top: 8px; height: 12px; background: #ff3030; }
.flow b { grid-column: 3; color: #ff3030; }
.flow b span { font-weight: 300; }
.trades tr { height: 27px; line-height: 27px; }
.trades td:nth-child(1) { width: 88px; padding-left: 1px; }
.trades td:nth-child(2) { width: 101px; text-align: right; color: #ff3030; }
.trades td:nth-child(3) { width: 110px; text-align: right; color: #c8c800; }
.trades td:nth-child(4) { text-align: right; padding-right: 1px; color: #ff3030; }
.trades td.s:nth-child(4) { color: #00e600; }
```
